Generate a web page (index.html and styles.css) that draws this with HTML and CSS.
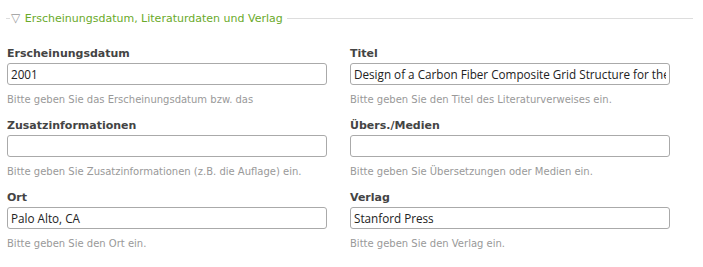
FILE: index.html
```html
<!DOCTYPE html>
<html lang="de">
<head>
  <meta charset="UTF-8" />
  <title>Literaturdaten</title>
  <link rel="stylesheet" href="styles.css">
</head>
<body>
  <fieldset class="gruppe">
    <legend><span class="pfeil">&#9661;</span> Erscheinungsdatum, Literaturdaten und Verlag</legend>

    <div class="felder">
      <div class="feld">
        <label for="datum">Erscheinungsdatum</label>
        <input id="datum" type="text" value="2001">
        <p class="hilfe">Bitte geben Sie das Erscheinungsdatum bzw. das</p>
      </div>
      <div class="feld">
        <label for="titel">Titel</label>
        <input id="titel" type="text" value="Design of a Carbon Fiber Composite Grid Structure for the GLAST Spacecraft">
        <p class="hilfe">Bitte geben Sie den Titel des Literaturverweises ein.</p>
      </div>
      <div class="feld">
        <label for="zusatz">Zusatzinformationen</label>
        <input id="zusatz" type="text" value="">
        <p class="hilfe">Bitte geben Sie Zusatzinformationen (z.B. die Auflage) ein.</p>
      </div>
      <div class="feld">
        <label for="medien">Übers./Medien</label>
        <input id="medien" type="text" value="">
        <p class="hilfe">Bitte geben Sie Übersetzungen oder Medien ein.</p>
      </div>
      <div class="feld">
        <label for="ort">Ort</label>
        <input id="ort" type="text" value="Palo Alto, CA">
        <p class="hilfe">Bitte geben Sie den Ort ein.</p>
      </div>
      <div class="feld">
        <label for="verlag">Verlag</label>
        <input id="verlag" type="text" value="Stanford Press">
        <p class="hilfe">Bitte geben Sie den Verlag ein.</p>
      </div>
    </div>
  </fieldset>
</body>
</html>
```

FILE: styles.css
```css
body {
  margin: 0;
  padding: 0;
  background-color: white;
  font-family: 'DejaVu Sans', Verdana, sans-serif;
  color: #333;
}

.gruppe {
  margin: 11px 10px 0 6px;
  padding: 0 0 0 1px;
  border: none;
  border-top: 1px solid #ddd;
}

.gruppe legend {
  padding: 0 4px 0 1px;
  margin-left: 3px;
  font-size: 11px;
  color: #6aaa2a;
  font-family: 'DejaVu Sans', Verdana, sans-serif;
}

.pfeil {
  color: #999;
  font-size: 12px;
  margin-right: 1px;
}

.felder {
  display: grid;
  grid-template-columns: 320px 320px;
  column-gap: 23px;
  margin-top: 22px;
}

.feld {
  height: 72px;
}

.feld label {
  display: block;
  font-weight: bold;
  font-size: 11px;
  color: #444;
  line-height: 14px;
  margin-bottom: 2px;
}

.feld input {
  box-sizing: border-box;
  width: 320px;
  height: 22px;
  margin: 0;
  padding: 0 3px;
  border: 1px solid #aaa;
  border-radius: 3px;
  font-family: 'Open Sans', 'Liberation Sans', sans-serif;
  font-size: 11.7px;
  color: #222;
}

.hilfe {
  margin: 8px 0 0;
  font-size: 10px;
  color: #999;
  line-height: 13px;
}
```
